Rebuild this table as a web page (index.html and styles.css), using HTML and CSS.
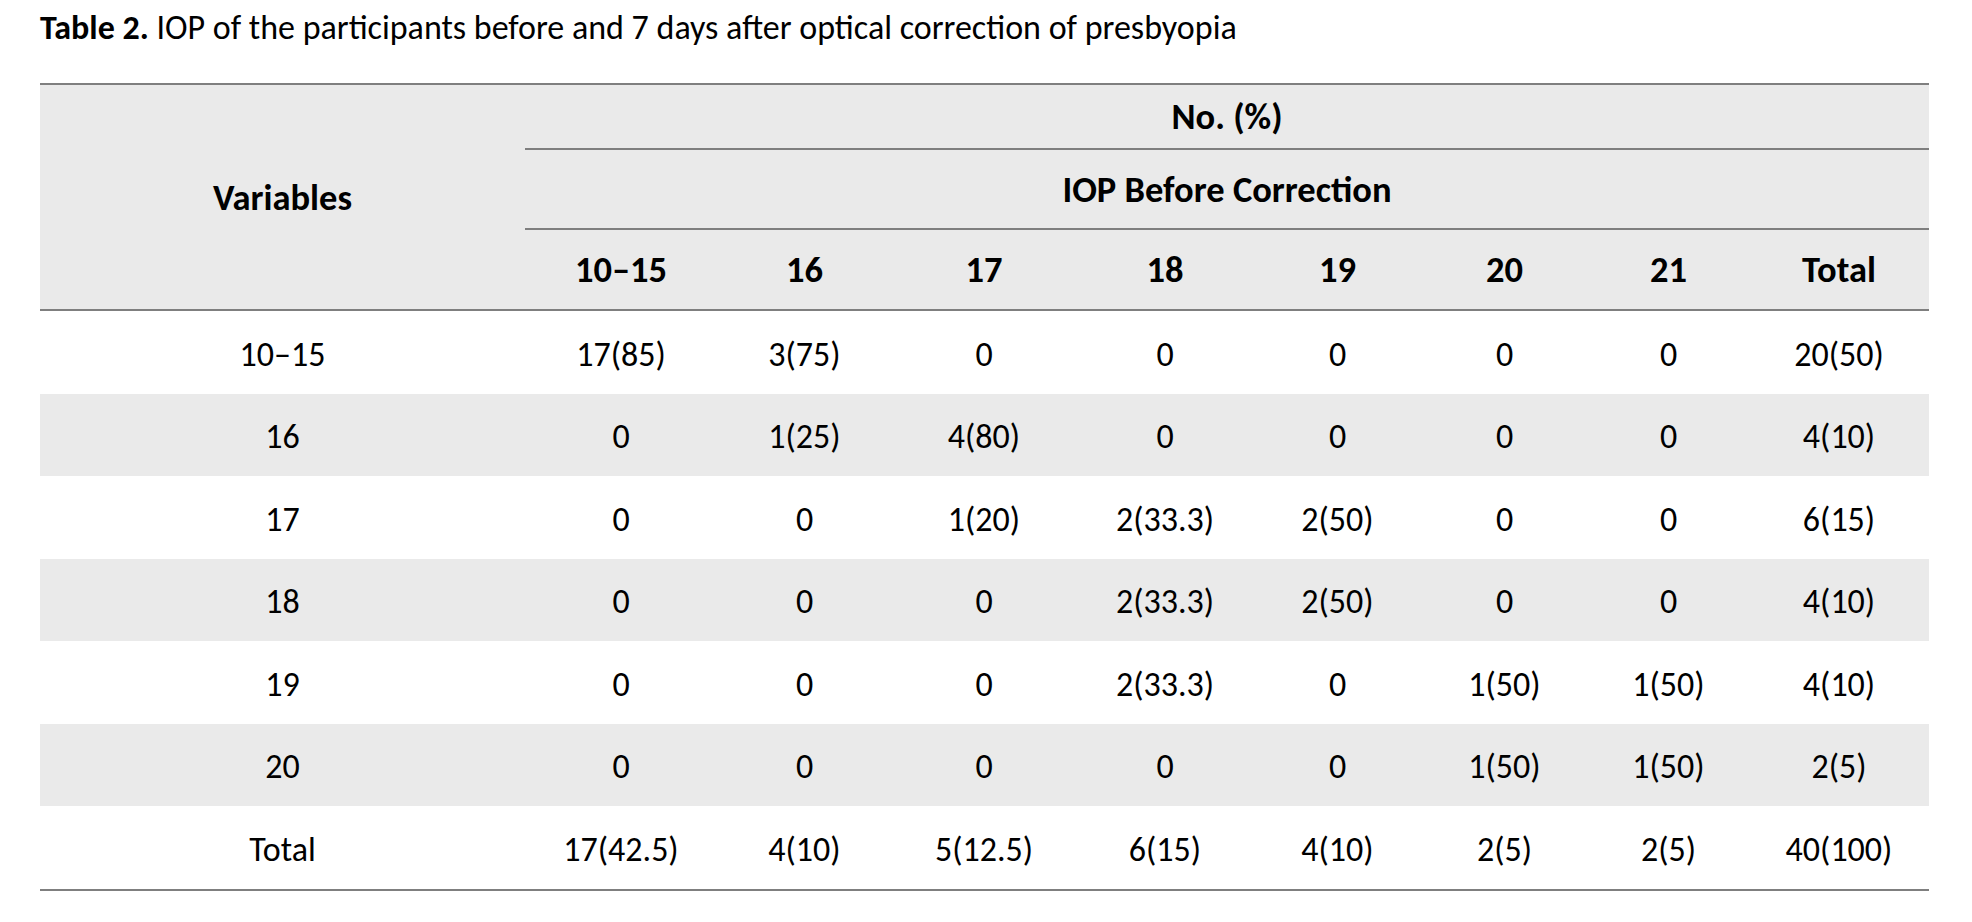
FILE: index.html
```html
<!DOCTYPE html>
<html>
<head>
<meta charset="utf-8">
<link rel="stylesheet" href="styles.css">
</head>
<body>
<div class="page">
  <p class="caption"><b>Table 2.</b> IOP of the participants before and 7 days after optical correction of presbyopia</p>
  <table class="iop">
    <colgroup>
      <col class="c-var">
      <col class="c-a">
      <col class="c-b">
      <col class="c-c">
      <col class="c-d">
      <col class="c-e">
      <col class="c-f">
      <col class="c-g">
      <col class="c-h">
    </colgroup>
    <thead>
      <tr class="h1">
        <th rowspan="3" class="var">Variables</th>
        <th colspan="8">No. (%)</th>
      </tr>
      <tr class="h2">
        <th colspan="8">IOP Before Correction</th>
      </tr>
      <tr class="h3">
        <th>10–15</th><th>16</th><th>17</th><th>18</th><th>19</th><th>20</th><th>21</th><th>Total</th>
      </tr>
    </thead>
    <tbody>
      <tr><td>10–15</td><td>17(85)</td><td>3(75)</td><td>0</td><td>0</td><td>0</td><td>0</td><td>0</td><td>20(50)</td></tr>
      <tr class="alt"><td>16</td><td>0</td><td>1(25)</td><td>4(80)</td><td>0</td><td>0</td><td>0</td><td>0</td><td>4(10)</td></tr>
      <tr><td>17</td><td>0</td><td>0</td><td>1(20)</td><td>2(33.3)</td><td>2(50)</td><td>0</td><td>0</td><td>6(15)</td></tr>
      <tr class="alt"><td>18</td><td>0</td><td>0</td><td>0</td><td>2(33.3)</td><td>2(50)</td><td>0</td><td>0</td><td>4(10)</td></tr>
      <tr><td>19</td><td>0</td><td>0</td><td>0</td><td>2(33.3)</td><td>0</td><td>1(50)</td><td>1(50)</td><td>4(10)</td></tr>
      <tr class="alt"><td>20</td><td>0</td><td>0</td><td>0</td><td>0</td><td>0</td><td>1(50)</td><td>1(50)</td><td>2(5)</td></tr>
      <tr class="last"><td>Total</td><td>17(42.5)</td><td>4(10)</td><td>5(12.5)</td><td>6(15)</td><td>4(10)</td><td>2(5)</td><td>2(5)</td><td>40(100)</td></tr>
    </tbody>
  </table>
</div>
</body>
</html>
```
FILE: styles.css
```css
html, body {
  margin: 0;
  padding: 0;
  background: #ffffff;
}

body {
  font-family: Carlito, "Liberation Sans Narrow", "Open Sans", sans-serif;
  color: #000;
}

.page {
  padding: 8px 40px 0 40px;
}

.caption {
  margin: 0 0 35px 0;
  font-size: 34px;
  line-height: 40px;
  white-space: nowrap;
}

.caption b {
  font-weight: 700;
}

.iop {
  width: 1889px;
  table-layout: fixed;
  border-collapse: collapse;
  border-top: 2px solid #7f7f7f;
}

.c-var { width: 485px; }
.c-a { width: 192px; }
.c-b { width: 175px; }
.c-c { width: 184px; }
.c-d { width: 178px; }
.c-e { width: 167px; }
.c-f { width: 167px; }
.c-g { width: 161px; }
.c-h { width: 180px; }

.iop th {
  background: #eaeaea;
  font-weight: 700;
  font-size: 36.5px;
  text-align: center;
  padding: 0;
  vertical-align: middle;
}

.iop td {
  font-size: 34px;
  text-align: center;
  padding: 4px 0 0 0;
  vertical-align: middle;
  height: 78.5px;
}

.iop .h1 th { height: 63px; border-bottom: 2px solid #7f7f7f; }
.iop .h2 th { height: 78px; border-bottom: 2px solid #7f7f7f; }
.iop .h3 th { height: 79px; border-bottom: 2px solid #7f7f7f; }
.iop th.var { border-bottom: 2px solid #7f7f7f; }

.iop tr.alt td {
  background: #eaeaea;
}

.iop tr.last td {
  border-bottom: 2px solid #7f7f7f;
}
```
